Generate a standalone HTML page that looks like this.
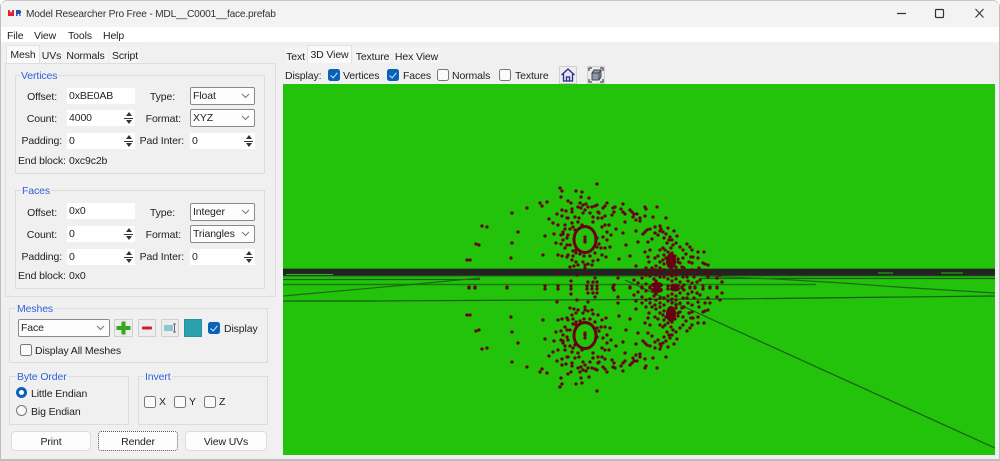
<!DOCTYPE html>
<html><head><meta charset="utf-8"><title>Model Researcher Pro Free</title>
<style>
html,body{margin:0;padding:0;background:#fff}
#w{position:relative;width:1000px;height:461px;overflow:hidden;background:#f0f0f0;font:10.5px "Liberation Sans",sans-serif;letter-spacing:-.12px;color:#222;border-radius:7px 7px 0 0;box-sizing:border-box;filter:blur(.25px)}
#w *{box-sizing:border-box}
.a,.t,.b,.i,.c,.g,.cb,.tab,.btn{position:absolute}
.t{white-space:nowrap;line-height:14px;margin-top:1px}
.r{text-align:right}
.bl{color:#2f62d8}
.g{border:1px solid #dcdcdc;background:#f0f0f0}
.i{background:#fff;height:16px;line-height:17px;padding-left:2px;white-space:nowrap;color:#222}
.i.s{background:linear-gradient(#333,#333) right 2px center/9px 1px no-repeat #fff}
.i.s:before,.i.s:after{content:"";position:absolute;right:3px;width:0;height:0;border-left:3.5px solid transparent;border-right:3.5px solid transparent}
.i.s:before{top:2px;border-bottom:4px solid #333}
.i.s:after{bottom:2px;border-top:4px solid #333}
.c{background:#fdfdfd;border:1px solid #8a8a8a;border-radius:2px;height:18px;line-height:17px;padding-left:2px;white-space:nowrap;color:#222}
.c svg{position:absolute;right:4px;top:5px}
.cb{width:12px;height:12px;border-radius:2.5px;border:1px solid #777;background:#fbfbfb}
.cb.on{background:#0a62b8;border-color:#0a62b8}
.cb.on:after{content:"";position:absolute;left:3px;top:1px;width:3px;height:6px;border:solid #d8e8f8;border-width:0 1px 1px 0;transform:rotate(40deg)}
.tab{background:#f4f4f4;height:16px;line-height:18px;text-align:center;color:#222;white-space:nowrap}
.tab.on{background:#fafafa;height:18px;line-height:18px;border:1px solid #e2e2e2;border-bottom:0}
.btn{background:#fcfcfc;border:1px solid #dcdcdc;border-radius:4px;height:20px;line-height:20px;text-align:center;color:#222}
.ib{position:absolute;background:#ededed;border:1px solid #cfcfcf}
</style></head><body>
<div id="w">
<div class="a" style="left:0;top:0;width:1000px;height:27px;background:#f3f3f3;border-top:1px solid #c8c8c8;border-radius:7px 7px 0 0"></div>
<div class="a" style="left:0;top:27px;width:1000px;height:15px;background:#fff"></div>
<div class="a" style="left:0;top:0;width:1px;height:461px;background:#bdbdbd"></div>
<div class="a" style="left:999px;top:0;width:1px;height:461px;background:#bdbdbd"></div>
<div class="a" style="left:0;top:459px;width:1000px;height:2px;background:#bdbdbd"></div>

<svg class="a" style="left:8px;top:9px" width="14" height="8" viewBox="0 0 14 8"><path d="M0 7V1h1.500L3 4 4.500 1H6v6z" fill="#e02030"/><path d="M8 7V1h4l1 1v2l-1 1 1 2h-1.500L11 5H9.500v2z" fill="#2b50b0"/></svg>
<div class="t" style="left:26px;top:7px;color:#333;font-size:10.2px;letter-spacing:-.2px">Model Researcher Pro Free - MDL__C0001__face.prefab</div>
<svg class="a" style="left:890px;top:5px" width="110" height="18" viewBox="890 5 110 18" fill="none" stroke="#333"><path d="M897 13.500h9" stroke-width="1.200"/><rect x="935.500" y="9.500" width="8" height="8" rx="1" stroke-width="1.200"/><path d="M975.500 9l8 8.500M983.500 9l-8 8.500" stroke-width="1.100"/></svg>

<div class="t" style="left:7px;top:28px">File</div>
<div class="t" style="left:34px;top:28px">View</div>
<div class="t" style="left:68px;top:28px">Tools</div>
<div class="t" style="left:103px;top:28px">Help</div>

<!-- left tabs -->
<div class="a" style="left:5px;top:63px;width:271px;height:234px;border:1px solid #dedede;background:#f0f0f0"></div>
<div class="tab on" style="left:6px;top:45px;width:34px">Mesh</div>
<div class="tab" style="left:41px;top:47px;width:21px">UVs</div>
<div class="tab" style="left:63px;top:47px;width:45px">Normals</div>
<div class="tab" style="left:110px;top:47px;width:30px">Script</div>

<!-- Vertices -->
<div class="g" style="left:15px;top:75px;width:250px;height:99px"></div>
<div class="t bl" style="left:20px;top:68px;background:#f0f0f0;padding:0 1px">Vertices</div>
<div class="t r" style="left:7px;top:89px;width:50px">Offset:</div>
<div class="i" style="left:67px;top:88px;width:68px">0xBE0AB</div>
<div class="t r" style="left:7px;top:111px;width:50px">Count:</div>
<div class="i s" style="left:67px;top:110px;width:68px">4000</div>
<div class="t r" style="left:7px;top:133px;width:55px">Padding:</div>
<div class="i s" style="left:67px;top:133px;width:68px">0</div>
<div class="t r" style="left:135px;top:89px;width:40px">Type:</div>
<div class="c" style="left:190px;top:87px;width:65px">Float<svg width="9" height="6"><path d="M1 1l3.500 3.500L8 1" fill="none" stroke="#777"/></svg></div>
<div class="t r" style="left:135px;top:111px;width:46px">Format:</div>
<div class="c" style="left:190px;top:109px;width:65px">XYZ<svg width="9" height="6"><path d="M1 1l3.500 3.500L8 1" fill="none" stroke="#777"/></svg></div>
<div class="t r" style="left:130px;top:133px;width:54px">Pad Inter:</div>
<div class="i s" style="left:190px;top:133px;width:65px">0</div>
<div class="t" style="left:18px;top:153px">End block:</div>
<div class="t" style="left:69px;top:153px">0xc9c2b</div>

<!-- Faces -->
<div class="g" style="left:15px;top:190px;width:250px;height:99px"></div>
<div class="t bl" style="left:21px;top:183px;background:#f0f0f0;padding:0 1px">Faces</div>
<div class="t r" style="left:7px;top:205px;width:50px">Offset:</div>
<div class="i" style="left:67px;top:203px;width:68px">0x0</div>
<div class="t r" style="left:7px;top:227px;width:50px">Count:</div>
<div class="i s" style="left:67px;top:226px;width:68px">0</div>
<div class="t r" style="left:7px;top:249px;width:55px">Padding:</div>
<div class="i s" style="left:67px;top:249px;width:68px">0</div>
<div class="t r" style="left:135px;top:205px;width:40px">Type:</div>
<div class="c" style="left:190px;top:203px;width:65px">Integer<svg width="9" height="6"><path d="M1 1l3.500 3.500L8 1" fill="none" stroke="#777"/></svg></div>
<div class="t r" style="left:135px;top:227px;width:46px">Format:</div>
<div class="c" style="left:190px;top:225px;width:65px">Triangles<svg width="9" height="6"><path d="M1 1l3.500 3.500L8 1" fill="none" stroke="#777"/></svg></div>
<div class="t r" style="left:130px;top:249px;width:54px">Pad Inter:</div>
<div class="i s" style="left:190px;top:249px;width:65px">0</div>
<div class="t" style="left:18px;top:268px">End block:</div>
<div class="t" style="left:69px;top:268px">0x0</div>

<!-- Meshes -->
<div class="g" style="left:9px;top:308px;width:259px;height:55px"></div>
<div class="t bl" style="left:16px;top:301px;background:#f0f0f0;padding:0 1px">Meshes</div>
<div class="c" style="left:18px;top:319px;width:92px;padding-left:2px">Face<svg width="9" height="6"><path d="M1 1l3.500 3.500L8 1" fill="none" stroke="#777"/></svg></div>
<div class="ib" style="left:114px;top:319px;width:19px;height:18px"><svg width="17" height="16" style="display:block"><path d="M6.500 1.500h4v4.500h5v4h-5v4.500h-4v-4.500h-5v-4h5z" fill="#35a820"/></svg></div>
<div class="ib" style="left:138px;top:319px;width:18px;height:18px"><svg width="16" height="16" style="display:block"><rect x="3" y="6.500" width="10" height="3" rx="1" fill="#c8202c"/></svg></div>
<div class="ib" style="left:161px;top:319px;width:18px;height:18px"><svg width="16" height="16" style="display:block"><rect x="2" y="5" width="9" height="6" fill="#8ec4d4"/><path d="M12.500 4v8M11 4h3M11 12h3" stroke="#667" fill="none"/></svg></div>
<div class="a" style="left:184px;top:319px;width:18px;height:18px;background:#2a9fae;border:1px solid #2792a0"></div>
<div class="cb on" style="left:208px;top:322px"></div>
<div class="t" style="left:224px;top:321px">Display</div>
<div class="cb" style="left:20px;top:344px"></div>
<div class="t" style="left:35px;top:343px">Display All Meshes</div>

<!-- Byte order -->
<div class="g" style="left:9px;top:376px;width:120px;height:49px"></div>
<div class="t bl" style="left:16px;top:369px;background:#f0f0f0;padding:0 1px">Byte Order</div>
<div class="a" style="left:16px;top:387px;width:11px;height:11px;border-radius:50%;border:3.500px solid #0a62b8;background:#fff"></div>
<div class="t" style="left:31px;top:386px">Little Endian</div>
<div class="a" style="left:16px;top:405px;width:11px;height:11px;border-radius:50%;border:1px solid #777;background:#f8f8f8"></div>
<div class="t" style="left:31px;top:404px">Big Endian</div>

<!-- Invert -->
<div class="g" style="left:138px;top:376px;width:130px;height:49px"></div>
<div class="t bl" style="left:144px;top:369px;background:#f0f0f0;padding:0 1px">Invert</div>
<div class="cb" style="left:144px;top:396px"></div><div class="t" style="left:159px;top:394px">X</div>
<div class="cb" style="left:174px;top:396px"></div><div class="t" style="left:189px;top:394px">Y</div>
<div class="cb" style="left:204px;top:396px"></div><div class="t" style="left:219px;top:394px">Z</div>

<div class="btn" style="left:11px;top:431px;width:80px">Print</div>
<div class="btn" style="left:98px;top:431px;width:80px;border:1px dotted #555;border-radius:3px">Render</div>
<div class="btn" style="left:185px;top:431px;width:82px">View UVs</div>

<!-- right tabs -->
<div class="tab" style="left:285px;top:48px;width:21px;height:15px">Text</div>
<div class="tab on" style="left:307px;top:45px;width:45px">3D View</div>
<div class="tab" style="left:353px;top:48px;width:39px;height:15px">Texture</div>
<div class="tab" style="left:393px;top:48px;width:47px;height:15px">Hex View</div>
<div class="t" style="left:285px;top:68px">Display:</div>
<div class="cb on" style="left:328px;top:69px"></div><div class="t" style="left:343px;top:68px">Vertices</div>
<div class="cb on" style="left:387px;top:69px"></div><div class="t" style="left:403px;top:68px">Faces</div>
<div class="cb" style="left:437px;top:69px"></div><div class="t" style="left:452px;top:68px">Normals</div>
<div class="cb" style="left:499px;top:69px"></div><div class="t" style="left:515px;top:68px">Texture</div>
<div class="ib" style="left:559px;top:66px;width:18px;height:18px"><svg width="16" height="16" style="display:block"><path d="M1.500 8L8 2l6.500 6M3.500 7v7h9V7M6.500 14v-4h3v4" fill="#dfe4f4" stroke="#2a2a8c" stroke-width="1.300"/></svg></div>
<div class="ib" style="left:587px;top:66px;width:18px;height:18px"><svg width="16" height="16" style="display:block"><path d="M4 6l2-3h7v7l-2 3H4z" fill="#8f98a8" stroke="#445"/><path d="M4 6h7v7M11 6l2-3" fill="none" stroke="#445"/><path d="M1 4V1h3M12 1h3v3M1 12v3h3M15 12v3h-3" fill="none" stroke="#222"/></svg></div>

<!-- viewport -->
<svg class="a" style="left:283px;top:84px" width="712" height="371" viewBox="283 84 712 371">
<rect x="283" y="84" width="712" height="371" fill="#22c30a"/>
<rect x="283" y="268" width="712" height="1" fill="#1c8f10"/>
<rect x="283" y="269" width="712" height="7" fill="#232323"/>
<path d="M286 274.500h47M878 273h15M941 273h22" stroke="#22c30a" stroke-width="1"/>
<path d="M283 276.500H995" stroke="#1f9a10" stroke-width="1.500"/>
<path d="M283 279.500H480M700 278.500H995" stroke="#1a5c14" stroke-width="1.200"/>
<path d="M283 284.500H816" stroke="#1a7a10" stroke-width="1.500"/>
<path d="M283 296L406 285L480 278" stroke="#1c6a14" stroke-width="1.200" fill="none"/>
<path d="M700 276L775 279L843 283L897 287L995 293" stroke="#1c6a14" stroke-width="1.200" fill="none"/>
<path d="M283 301H373L724 299L995 296" stroke="#1a5c14" stroke-width="1.200" fill="none"/>
<path d="M625 280L995 448" stroke="#1a5c14" stroke-width="1.200" fill="none"/>
<g id="d" fill="none" stroke="#680010">
<ellipse cx="585" cy="239.500" rx="11" ry="13" stroke-width="3"/>
<ellipse cx="671" cy="261" rx="5" ry="8" fill="#680010" stroke="none"/>
<ellipse cx="657" cy="285" rx="6" ry="3" fill="#680010" stroke="none"/>
<ellipse cx="675" cy="286" rx="5" ry="2.500" fill="#680010" stroke="none"/>
<path stroke-width="3.300" stroke-linecap="round" d="M597 184h0M560 188h0M562 191h0M576 191h0M561 197h0M582 192h0M581 197h0M589 198h0M568 201h0M571 203h0M547 202h0M540 203h0M542 206h0M527 208h0M512 213h0M482 226h0M487 227h0M518 232h0M512 243h0M476 244h0M479 245h0M511 258h0M467 260h0M470 260h0M580 203h0M583 205h0M586 204h0M588 207h0M581 208h0M585 210h0M583 213h0M595 206h0M597 205h0M599 213h0M607 203h0M605 206h0M603 208h0M613 208h0M615 207h0M614 212h0M623 204h0M623 212h0M625 214h0M632 212h0M630 210h0M634 214h0M633 217h0M636 220h0M640 218h0M645 207h0M646 209h0M657 207h0M653 217h0M666 218h0M625 222h0M605 216h0M598 218h0M593 217h0M609 225h0M602 227h0M616 229h0M623 233h0M611 235h0M603 237h0M643 234h0M645 232h0M636 231h0M647 230h0M650 229h0M655 227h0M660 226h0M661 229h0M663 232h0M666 234h0M668 228h0M674 231h0M677 236h0M670 237h0M672 240h0M652 239h0M648 242h0M638 242h0M626 245h0M610 247h0M606 257h0M619 259h0M630 256h0M645 252h0M650 250h0M660 250h0M663 248h0M673 245h0M676 243h0M680 247h0M683 250h0M687 244h0M690 247h0M692 250h0M698 252h0M704 252h0M693 257h0M698 258h0M705 264h0M708 265h0M692 263h0M683 258h0M648 257h0M655 258h0M658 256h0M649 262h0M636 266h0M549 219h0M557 214h0M562 210h0M566 211h0M572 209h0M562 216h0M567 218h0M575 217h0M579 218h0M553 223h0M558 225h0M572 223h0M573 227h0M575 230h0M565 229h0M570 229h0M554 234h0M561 235h0M563 234h0M545 236h0M568 235h0M567 238h0M556 243h0M561 244h0M570 245h0M567 245h0M573 251h0M576 253h0M543 255h0M558 255h0M562 256h0M567 257h0M573 256h0M576 262h0M570 267h0M574 266h0M583 262h0M585 265h0M588 264h0M595 253h0M597 247h0M601 248h0M593 261h0M590 256h0M597 238h0M599 244h0M585 237h0M585 240h0M585 242h0M590 213h0M593 222h0M578 222h0M582 225h0M576 250h0M580 254h0M584 256h0M557 273h0M577 275h0M588 273h0M595 278h0M588 282h0M593 282h0M597 282h0M571 281h0M614 285h0M618 272h0M618 278h0M636 274h0M634 280h0M638 283h0M545 289h0M507 288h0M475 288h0M469 288h0M558 289h0M571 289h0M587 289h0M592 289h0M597 289h0M613 288h0M630 288h0M642 278h0M646 275h0M650 272h0M655 270h0M660 268h0M664 270h0M668 274h0M672 272h0M676 270h0M680 272h0M684 268h0M688 272h0M692 270h0M664 255h0M668 252h0M672 253h0M675 256h0M678 259h0M680 263h0M682 267h0M666 258h0M664 264h0M660 262h0M656 266h0M652 268h0M646 268h0M642 272h0M650 276h0M654 279h0M646 284h0M642 288h0M650 288h0M668 279h0M672 281h0M676 279h0M680 282h0M684 285h0M688 281h0M676 287h0M682 288h0M668 286h0M690 287h0M698 273h0M705 272h0M710 272h0M720 275h0M700 280h0M708 277h0M717 278h0M722 282h0M697 282h0M703 286h0M710 287h0M717 287h0M694 277h0M699 268h0M703 263h0M689 262h0M691 257h0M686 254h0M671 248h0M667 243h0M669 240h0M664 238h0M658 235h0M660 231h0M655 233h0M640 221h0M645 216h0M637 214h0M612 215h0M621 209h0M578 207h0M592 207h0M572 212h0M598 212h0M568 218h0M602 218h0M565 225h0M605 225h0M563 232h0M607 232h0M563 240h0M607 240h0M565 248h0M605 248h0M568 255h0M602 255h0M572 260h0M598 260h0M578 265h0M585 268h0M592 265h0M672 267h0M676 267h0M663 260h0M678 262h0M665 250h0M660 272h0M656 275h0M660 277h0M664 277h0M656 281h0M672 276h0M676 275h0M683 277h0M687 277h0M692 283h0M695 287h0"/>
</g>
<use href="#d" transform="matrix(1 0 0 -1 0 575)"/>
</svg>
</div>
</body></html>
